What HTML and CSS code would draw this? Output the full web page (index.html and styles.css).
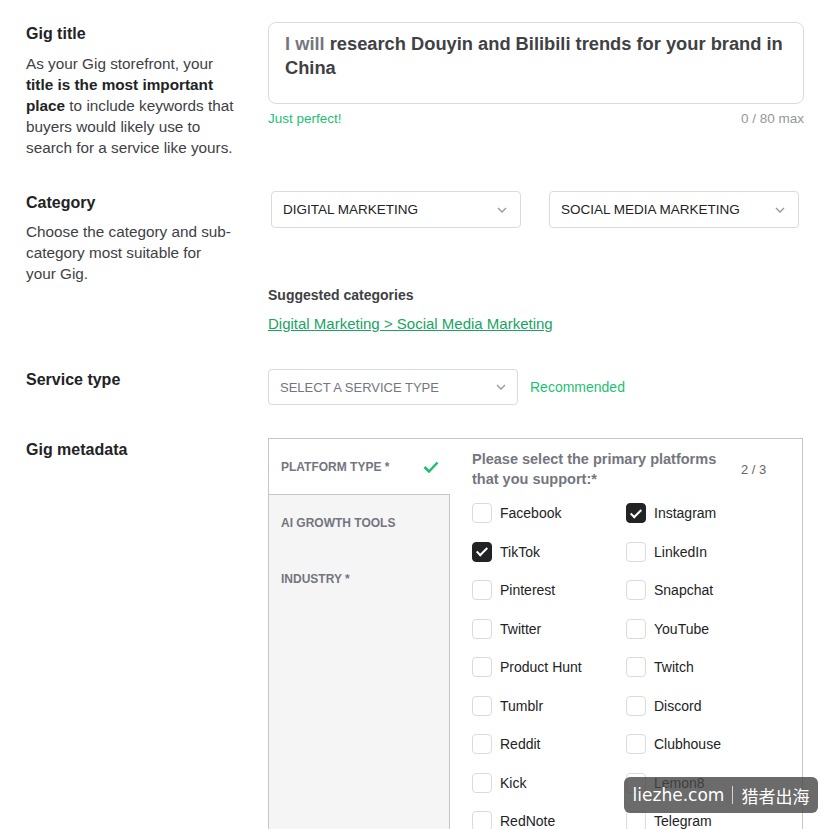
FILE: index.html
```html
<!DOCTYPE html>
<html lang="en">
<head>
  <meta charset="UTF-8" />
  <title>Gig overview</title>
  <link rel="stylesheet" href="styles.css">
</head>
<body>
  <div class="page">

    <div class="row row-title">
      <div class="side">
        <h3>Gig title</h3>
        <p>As your Gig storefront, your <b>title is the most important place</b> to include keywords that buyers would likely use to search for a service like yours.</p>
      </div>
      <div class="main">
        <div class="title-box"><span class="prefix">I will</span> research Douyin and Bilibili trends for your brand in China</div>
        <div class="title-hint">
          <span class="ok">Just perfect!</span>
          <span class="count">0 / 80 max</span>
        </div>
      </div>
    </div>

    <div class="row row-category">
      <div class="side">
        <h3>Category</h3>
        <p class="narrow">Choose the category and sub-category most suitable for your Gig.</p>
      </div>
      <div class="main">
        <div class="selects">
          <div class="select">DIGITAL MARKETING <svg class="chev" width="10" height="6" viewBox="0 0 10 6"><polyline points="1,1 5,5 9,1" /></svg></div>
          <div class="select">SOCIAL MEDIA MARKETING <svg class="chev" width="10" height="6" viewBox="0 0 10 6"><polyline points="1,1 5,5 9,1" /></svg></div>
        </div>
        <div class="suggested">Suggested categories</div>
        <a class="suggested-link" href="#">Digital Marketing &gt; Social Media Marketing</a>
      </div>
    </div>

    <div class="row row-service">
      <div class="side">
        <h3>Service type</h3>
      </div>
      <div class="main service">
        <div class="select placeholder">SELECT A SERVICE TYPE <svg class="chev" width="10" height="6" viewBox="0 0 10 6"><polyline points="1,1 5,5 9,1" /></svg></div>
        <span class="recommended">Recommended</span>
      </div>
    </div>

    <div class="row row-meta">
      <div class="side">
        <h3>Gig metadata</h3>
      </div>
      <div class="main">
        <div class="meta-box">
          <div class="tabs">
            <div class="tab active">PLATFORM TYPE * <svg class="tick" width="16" height="12" viewBox="0 0 16 12"><polyline points="1.5,6 6,10.5 14.5,1.5" /></svg></div>
            <div class="tab">AI GROWTH TOOLS</div>
            <div class="tab">INDUSTRY *</div>
          </div>
          <div class="meta-content">
            <div class="meta-head">
              <div class="question">Please select the primary platforms that you support:*</div>
              <div class="picked">2 / 3</div>
            </div>
            <div class="options">
              <label class="opt"><span class="box"></span>Facebook</label>
              <label class="opt"><span class="box checked"></span>Instagram</label>
              <label class="opt"><span class="box checked"></span>TikTok</label>
              <label class="opt"><span class="box"></span>LinkedIn</label>
              <label class="opt"><span class="box"></span>Pinterest</label>
              <label class="opt"><span class="box"></span>Snapchat</label>
              <label class="opt"><span class="box"></span>Twitter</label>
              <label class="opt"><span class="box"></span>YouTube</label>
              <label class="opt"><span class="box"></span>Product Hunt</label>
              <label class="opt"><span class="box"></span>Twitch</label>
              <label class="opt"><span class="box"></span>Tumblr</label>
              <label class="opt"><span class="box"></span>Discord</label>
              <label class="opt"><span class="box"></span>Reddit</label>
              <label class="opt"><span class="box"></span>Clubhouse</label>
              <label class="opt"><span class="box"></span>Kick</label>
              <label class="opt"><span class="box"></span>Lemon8</label>
              <label class="opt"><span class="box"></span>RedNote</label>
              <label class="opt"><span class="box"></span>Telegram</label>
            </div>
          </div>
        </div>
      </div>
    </div>

  </div>

  <div class="watermark">liezhe.com <span class="sep"></span> 猎者出海</div>
</body>
</html>
```

FILE: styles.css
```css
body {
  margin: 0;
  font-family: "Liberation Sans", Arial, sans-serif;
  color: #404145;
  background: #fff;
  overflow: hidden;
}

.page {
  padding: 22px 0 0 26px;
}

.row {
  display: grid;
  grid-template-columns: 210px 536px;
  column-gap: 32px;
  align-items: start;
}

.side h3 {
  margin: 0;
  padding-top: 1px;
  font-size: 16px;
  line-height: 22px;
  color: #222325;
}

.side p {
  margin: 8px 0 0;
  font-size: 15.3px;
  line-height: 21px;
  color: #404145;
}

.side p.narrow {
  margin-top: 7px;
  max-width: 206px;
}

.side p b {
  color: #222325;
}

/* title */
.title-box {
  height: 82px;
  box-sizing: border-box;
  border: 1px solid #dadbdd;
  border-radius: 8px;
  padding: 9px 16px;
  font-size: 18.3px;
  line-height: 24px;
  font-weight: bold;
  color: #404145;
}

.title-box .prefix {
  color: #74767e;
}

.title-hint {
  display: flex;
  justify-content: space-between;
  margin-top: 7px;
  font-size: 13.5px;
  line-height: 16px;
}

.title-hint .ok {
  color: #1dbf73;
}

.title-hint .count {
  color: #95979d;
}

/* category */
.row-category {
  margin-top: 33px;
}

.selects {
  display: flex;
  gap: 28px;
  padding: 0 5px 0 3px;
}

.select {
  width: 250px;
  height: 37px;
  box-sizing: border-box;
  border: 1px solid #dadbdd;
  border-radius: 4px;
  padding: 0 13px 0 11px;
  display: flex;
  align-items: center;
  justify-content: space-between;
  font-size: 13.5px;
  color: #222325;
}

.chev {
  fill: none;
  stroke: #95979d;
  stroke-width: 1.3;
}

.suggested {
  margin-top: 57px;
  font-size: 14px;
  line-height: 20px;
  font-weight: bold;
  color: #404145;
}

.suggested-link {
  display: inline-block;
  margin-top: 9px;
  font-size: 15px;
  line-height: 20px;
  color: #19a463;
}

/* service type */
.row-service {
  margin-top: 35px;
}

.row-service h3 {
  padding-top: 0;
}

.service {
  display: flex;
  align-items: center;
  gap: 12px;
}

.service .select {
  height: 36px;
  padding-right: 11px;
}

.select.placeholder {
  font-size: 13px;
  color: #74767e;
}

.recommended {
  font-size: 14px;
  color: #1dbf73;
}

/* metadata */
.row-meta {
  margin-top: 33px;
}

.meta-box {
  display: flex;
  border: 1px solid #c5c6c9;
  border-bottom: none;
  height: 420px;
  width: 535px;
  box-sizing: border-box;
}

.tabs {
  width: 180px;
  flex: none;
  background: #f5f5f5;
  border-right: 1px solid #c5c6c9;
}

.tab {
  height: 56px;
  box-sizing: border-box;
  padding: 0 12px;
  display: flex;
  align-items: center;
  justify-content: space-between;
  font-size: 12px;
  font-weight: bold;
  color: #74767e;
}

.tab.active {
  background: #fff;
  border-bottom: 1px solid #c5c6c9;
  margin-right: -1px;
  padding-right: 11px;
}

.tick {
  fill: none;
  stroke: #1dbf73;
  stroke-width: 2.5;
}

.meta-content {
  flex: 1;
  padding: 10px 0 0 22px;
}

.meta-head {
  display: flex;
  align-items: center;
}

.question {
  width: 262px;
  font-size: 14.5px;
  line-height: 20px;
  font-weight: bold;
  color: #74767e;
}

.picked {
  margin-left: 7px;
  font-size: 13px;
  color: #62646a;
}

.options {
  display: grid;
  grid-template-columns: 154px 154px;
  margin-top: 14px;
  row-gap: 18.5px;
}

.opt {
  display: flex;
  align-items: center;
  gap: 8px;
  font-size: 14px;
  line-height: 20px;
  color: #222325;
}

.box {
  width: 20px;
  height: 20px;
  box-sizing: border-box;
  border: 1px solid #dadbdd;
  border-radius: 4px;
  flex: none;
  position: relative;
}

.box.checked {
  background: #222325;
  border-color: #222325;
}

.box.checked::after {
  content: "";
  position: absolute;
  left: 6px;
  top: 2.5px;
  width: 4px;
  height: 9px;
  border-right: 2px solid #fff;
  border-bottom: 2px solid #fff;
  transform: rotate(45deg);
}

.watermark {
  position: absolute;
  left: 624px;
  top: 777px;
  width: 194px;
  height: 36px;
  box-sizing: border-box;
  border-radius: 6px;
  background: rgba(70, 70, 70, 0.8);
  color: #fff;
  display: flex;
  align-items: center;
  justify-content: center;
  gap: 8px;
  font-family: "DejaVu Sans", "Noto Sans CJK SC", sans-serif;
  font-size: 17px;
}

.watermark .sep {
  width: 1px;
  height: 18px;
  background: rgba(255, 255, 255, 0.7);
}
```
